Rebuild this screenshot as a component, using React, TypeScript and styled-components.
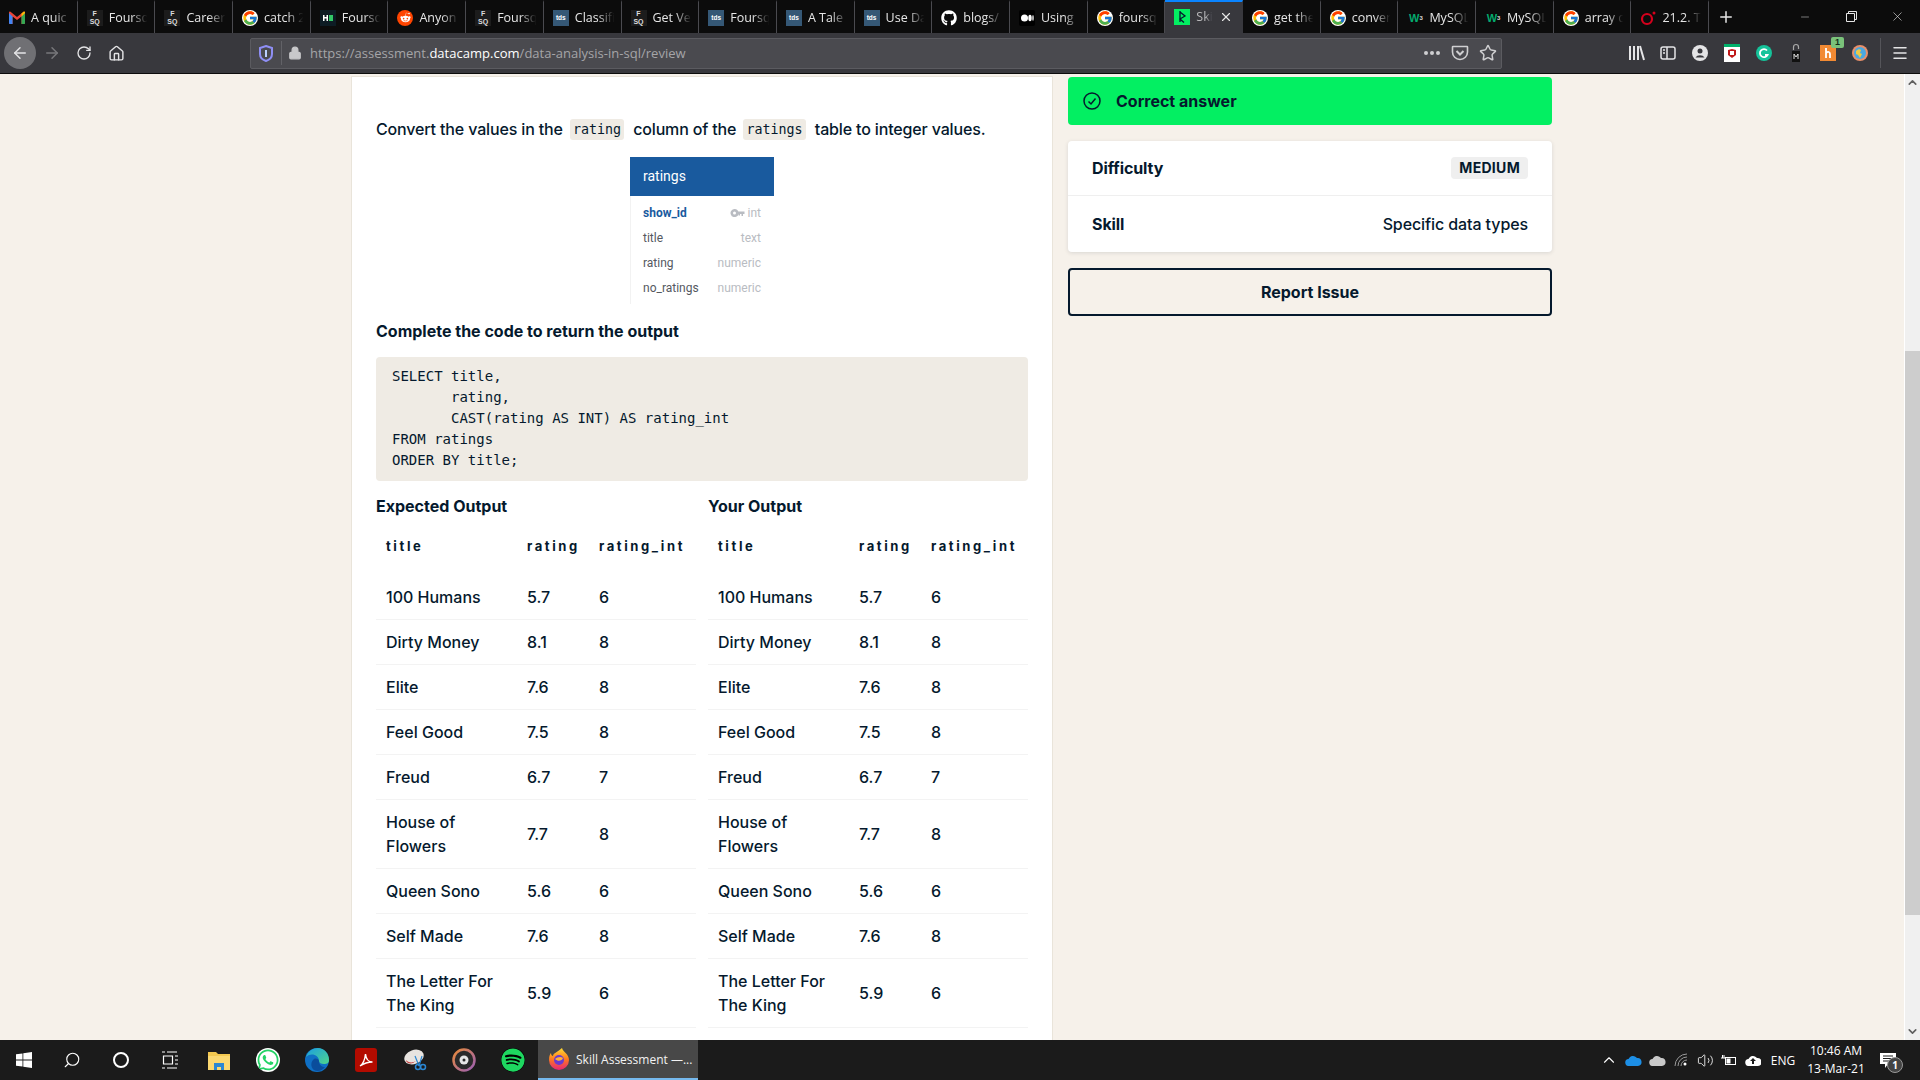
import React from "react";
import styled, { createGlobalStyle } from "styled-components";
import { ArrowLeft, ArrowRight, RotateCw, Home, Lock, Plus, Minus, X, Star, Menu, ChevronUp, ChevronDown, Search, Volume2 } from "lucide-react";
import { FcGoogle } from "react-icons/fc";
import { FaGithub, FaRedditAlien, FaWhatsapp, FaSpotify } from "react-icons/fa";

const GlobalStyle = createGlobalStyle`
  html, body { margin: 0; padding: 0; width: 1920px; height: 1080px; overflow: hidden; background: #f6f1ea; }
  * { box-sizing: border-box; }
`;

const Screen = styled.div`
  width: 1920px;
  height: 1080px;
  display: flex;
  flex-direction: column;
  font-family: Inter, "Liberation Sans", sans-serif;
  color: #05192d;
`;

/* browser chrome */
const TabStrip = styled.div`
  height: 33px;
  background: #0c0c0c;
  display: flex;
  font-family: "Open Sans", sans-serif;
`;

const TabItem = styled.div<{ $active?: boolean }>`
  width: 77.7px;
  height: 33px;
  display: flex;
  align-items: center;
  padding-left: 9px;
  padding-right: ${(p) => (p.$active ? "9px" : "5px")};
  gap: 6px;
  flex-shrink: 0;
  color: ${(p) => (p.$active ? "#b9b9bb" : "#e6e6e6")};
  background: ${(p) => (p.$active ? "#38383d" : "transparent")};
  border-right: 1px solid ${(p) => (p.$active ? "transparent" : "#4a4a4f")};
  border-top: 2px solid ${(p) => (p.$active ? "#0a84ff" : "transparent")};
  padding-bottom: ${(p) => (p.$active ? "2px" : "0")};
  font-size: 12.5px;
`;

const TabTitle = styled.span`
  flex: 1;
  min-width: 0;
  overflow: hidden;
  white-space: nowrap;
  -webkit-mask-image: linear-gradient(90deg, #000 55%, transparent 96%);
  mask-image: linear-gradient(90deg, #000 55%, transparent 96%);
`;

const Favicon = styled.span`
  width: 16px;
  height: 16px;
  flex-shrink: 0;
  display: flex;
  align-items: center;
  justify-content: center;
`;

const FsqIcon = styled(Favicon)`
  flex-direction: column;
  font: 700 7px/8px "Liberation Sans", sans-serif;
  color: #ddd;
  background: #1c1c1c;
`;

const TdsIcon = styled(Favicon)`
  background: #355876;
  color: #fff;
  font: 700 6.5px "Liberation Sans", sans-serif;
`;

const W3Icon = styled(Favicon)`
  color: #04aa6d;
  font: 700 11px "Liberation Sans", sans-serif;
  letter-spacing: -1px;
  sup { font-size: 6px; color: #ddd; margin-left: 1px; line-height: 0; }
`;

const NewTab = styled.div`
  width: 34px;
  display: flex;
  align-items: center;
  justify-content: center;
  color: #e6e6e6;
`;

const WindowControls = styled.div`
  margin-left: auto;
  display: flex;
  color: #e6e6e6;
`;

const WindowButton = styled.div`
  width: 46px;
  height: 33px;
  display: flex;
  align-items: center;
  justify-content: center;
`;

const Toolbar = styled.div`
  height: 41px;
  background: #38383d;
  border-bottom: 1px solid #0c0c0c;
  display: flex;
  align-items: center;
  padding-left: 4px;
  color: #e4e4e6;
`;

const NavButton = styled.div<{ $round?: boolean; $dim?: boolean }>`
  width: 32px;
  height: 32px;
  border-radius: 50%;
  display: flex;
  align-items: center;
  justify-content: center;
  background: ${(p) => (p.$round ? "#707074" : "transparent")};
  color: ${(p) => (p.$dim ? "#77777b" : "inherit")};
`;

const UrlBar = styled.div`
  width: 1252px;
  height: 31px;
  margin-left: 118px;
  background: #4a4a4f;
  border: 1px solid #5b5b60;
  border-radius: 2px;
  display: flex;
  align-items: center;
  padding-left: 7px;
  font: 400 13px "Open Sans", sans-serif;
  color: #a5a5a8;
`;

const UrlDivider = styled.span`
  width: 1px;
  height: 24px;
  background: #626267;
  margin: 0 6px 0 7px;
`;

const UrlText = styled.span`
  margin-left: 8px;
  flex: 1;
  letter-spacing: 0.02px;
  b { font-weight: 400; color: #fff; }
`;

const UrlActions = styled.div`
  display: flex;
  align-items: center;
  gap: 10px;
  padding-right: 4px;
  color: #cfcfd1;
`;

const ToolIcons = styled.div`
  margin-left: 124px;
  display: flex;
  align-items: center;
  gap: 12px;
`;

const ToolIcon = styled.span`
  width: 20px;
  height: 20px;
  display: flex;
  align-items: center;
  justify-content: center;
  position: relative;
`;

const ExtBadge = styled.span`
  position: absolute;
  top: -6px;
  right: -6px;
  width: 13px;
  height: 11px;
  border-radius: 2px;
  background: #7ac27a;
  color: #12301a;
  font: 700 9px/11px "Liberation Sans", sans-serif;
  text-align: center;
`;

const ToolDivider = styled.span`
  width: 1px;
  height: 30px;
  background: #55555a;
  margin-left: -2px;
  margin-right: -3px;
`;

/* page */
const Viewport = styled.div`
  flex: 1;
  min-height: 0;
  display: flex;
  background: #f6f1ea;
`;

const PageBody = styled.main`
  flex: 1;
  display: flex;
  align-items: flex-start;
  gap: 15px;
  padding-left: 351px;
  padding-top: 2px;
  overflow: hidden;
`;

const QuestionCard = styled.section`
  width: 702px;
  height: 1000px;
  flex-shrink: 0;
  background: #fff;
  border: 1px solid #e9e4da;
  padding: 40px 24px 0 24px;
`;

const Instruction = styled.p`
  margin: 0;
  font-size: 16px;
  font-weight: 500;
  line-height: 24px;
  letter-spacing: -0.15px;
  white-space: nowrap;
`;

const InlineCode = styled.code`
  display: inline-block;
  height: 21px;
  margin: 2px 5px 0 3px;
  padding: 0 3px;
  background: #efebe4;
  border-radius: 3px;
  font: 400 13.33px/21px "DejaVu Sans Mono", monospace;
  letter-spacing: 0;
  vertical-align: top;
`;

const SchemaTable = styled.div`
  width: 144px;
  margin: 16px auto 0;
  border-left: 1px solid #f2f2f2;
  height: 147px;
  font-family: Roboto, sans-serif;
`;

const SchemaHeader = styled.div`
  height: 39px;
  margin-left: -1px;
  padding-left: 13px;
  background: #195a9e;
  color: #fff;
  font-size: 14px;
  line-height: 39px;
`;

const SchemaRows = styled.div`
  padding-top: 4px;
`;

const SchemaRow = styled.div<{ $key?: boolean }>`
  height: 25px;
  padding: 0 13px 0 12px;
  display: flex;
  align-items: center;
  justify-content: space-between;
  font-size: 12px;
  font-weight: ${(p) => (p.$key ? 700 : 400)};
  color: ${(p) => (p.$key ? "#195a9e" : "#55595f")};
`;

const SchemaType = styled.span`
  color: #b9bcc2;
  font-weight: 400;
  display: flex;
  align-items: center;
  gap: 3px;
`;

const SectionHeading = styled.h3`
  margin: 15px 0 0;
  font-size: 16px;
  font-weight: 700;
  line-height: 24px;
`;

const CodeBlock = styled.pre`
  margin: 14px 0 13px;
  height: 124px;
  padding: 9px 16px 10px;
  background: #efebe4;
  border-radius: 4px;
  font: 400 14px/21px "DejaVu Sans Mono", monospace;
`;

const Outputs = styled.div`
  display: grid;
  grid-template-columns: 320px 320px;
  gap: 12px;
`;

const OutputTitle = styled.h3`
  margin: 0 0 13px;
  font-size: 16px;
  font-weight: 700;
  line-height: 24px;
`;

const DataTable = styled.table`
  width: 320px;
  border-collapse: collapse;
  table-layout: fixed;
  th {
    height: 44px;
    padding: 6px 0 0 10px;
    vertical-align: top;
    text-align: left;
    font: 700 13px/18px Inter, sans-serif;
    letter-spacing: 2.6px;
    white-space: nowrap;
  }
  td {
    padding: 10px 10px;
    font-size: 16px;
    font-weight: 500;
    line-height: 24px;
    border-bottom: 1px solid #f3f3f3;
  }
`;

const SideColumn = styled.aside`
  width: 484px;
  padding-top: 1px;
  display: flex;
  flex-direction: column;
`;

const CorrectBanner = styled.div`
  height: 48px;
  background: #03ef62;
  border-radius: 4px;
  display: flex;
  align-items: center;
  gap: 15px;
  padding-left: 15px;
  font-size: 16px;
  font-weight: 700;
`;

const InfoCard = styled.div`
  margin-top: 16px;
  height: 111px;
  background: #fff;
  border-radius: 4px;
  box-shadow: 0 1px 4px rgba(5, 25, 45, 0.12);
`;

const InfoRow = styled.div<{ $tall?: boolean }>`
  height: ${(p) => (p.$tall ? "56px" : "55px")};
  padding: 0 24px;
  display: flex;
  align-items: center;
  justify-content: space-between;
  font-size: 16px;
  font-weight: 500;
  letter-spacing: -0.1px;
  border-bottom: ${(p) => (p.$tall ? "0" : "1px solid #efefef")};
  strong { font-weight: 700; }
`;

const LevelBadge = styled.span`
  height: 22px;
  padding: 0 8px;
  border-radius: 4px;
  background: #efefef;
  font-size: 14px;
  font-weight: 700;
  letter-spacing: 0.3px;
  line-height: 22px;
`;

const ReportButton = styled.button`
  margin-top: 16px;
  height: 48px;
  background: transparent;
  border: 2px solid #05192d;
  border-radius: 4px;
  font: 700 16px Inter, sans-serif;
  color: #05192d;
`;

const ScrollBar = styled.div`
  width: 16px;
  flex-shrink: 0;
  background: #f0f0f0;
  display: flex;
  flex-direction: column;
  align-items: center;
  color: #606060;
  border-left: 1px solid #fff;
`;

const ScrollArrow = styled.div`
  height: 17px;
  display: flex;
  align-items: center;
  justify-content: center;
`;

const ScrollThumb = styled.div`
  width: 15px;
  height: 564px;
  margin-top: 260px;
  margin-bottom: auto;
  background: #cdcdcd;
`;

/* windows taskbar */
const Taskbar = styled.footer`
  height: 40px;
  background: #1b1b1b;
  display: flex;
  align-items: center;
  color: #fff;
  font-family: "Open Sans", sans-serif;
`;

const TaskIcon = styled.div<{ $start?: boolean }>`
  width: ${(p) => (p.$start ? "47px" : "49px")};
  height: 40px;
  flex-shrink: 0;
  display: flex;
  align-items: center;
  justify-content: center;
`;

const ActiveApp = styled.div`
  width: 160px;
  height: 40px;
  display: flex;
  align-items: center;
  gap: 6px;
  padding-left: 10px;
  background: #484848;
  border-bottom: 2px solid #76b9ed;
  font-size: 12px;
  color: #f2f2f2;
  margin-left: 1px;
`;

const Tray = styled.div`
  margin-left: auto;
  display: flex;
  align-items: center;
  height: 40px;
  padding-right: 16px;
  font-size: 12px;
`;

const TrayIcon = styled.span`
  width: 24px;
  display: flex;
  align-items: center;
  justify-content: center;
`;

const TrayText = styled.span`
  width: 34px;
  text-align: center;
  margin-left: 1px;
`;

const Clock = styled.div`
  width: 72px;
  text-align: center;
  line-height: 18px;
`;

const NotifyButton = styled.div`
  width: 32px;
  height: 40px;
  display: flex;
  align-items: center;
  justify-content: center;
  position: relative;
`;

const NotifyCount = styled.span`
  position: absolute;
  top: 17px;
  right: 1px;
  width: 16px;
  height: 16px;
  border-radius: 50%;
  border: 1px solid #999;
  background: #444;
  font: 700 10px/14px "Open Sans", sans-serif;
  text-align: center;
`;

/* favicons */
const GmailIcon = () => (
  <svg width="16" height="13" viewBox="0 0 16 13">
    <path d="M0 2v10a1 1 0 0 0 1 1h2.500V5.500L8 9V6L1.500.8A1 1 0 0 0 0 2z" fill="#e94335" />
    <path d="M16 2v10a1 1 0 0 1-1 1h-2.500V5.500L8 9V6l6.500-5.200A1 1 0 0 1 16 2z" fill="#e94335" />
    <path d="M0 2l3.500 3.500V13H1a1 1 0 0 1-1-1z" fill="#4285f4" />
    <path d="M16 2l-3.500 3.500V13H15a1 1 0 0 0 1-1z" fill="#34a853" />
    <path d="M16 2a1 1 0 0 0-1.500-1.200L12.500 2.400v3.100z" fill="#fbbc05" />
  </svg>
);

const Fsq = () => (
  <FsqIcon>
    <span>F</span>
    <span>SQ</span>
  </FsqIcon>
);

const Tds = () => <TdsIcon>tds</TdsIcon>;

const Google = () => (
  <Favicon>
    <FcGoogle size={16} style={{ background: "#fff", borderRadius: 8 }} />
  </Favicon>
);

const HnIcon = () => (
  <Favicon>
    <svg width="16" height="16" viewBox="0 0 16 16">
      <rect width="16" height="16" fill="#0d1c24" />
      <path d="M3 5h1.500v2h2V5H8v6H6.500V8.500h-2V11H3z" fill="#fff" />
      <rect x="9" y="5" width="4" height="6" fill="#32c766" />
    </svg>
  </Favicon>
);

const RedditIcon = () => (
  <Favicon style={{ background: "#ff4500", borderRadius: 8 }}>
    <FaRedditAlien size={11} color="#fff" />
  </Favicon>
);

const MediumIcon = () => (
  <Favicon>
    <svg width="16" height="16" viewBox="0 0 16 16">
      <rect width="16" height="16" rx="2" fill="#000" />
      <circle cx="5.500" cy="8" r="3.500" fill="#fff" />
      <ellipse cx="11" cy="8" rx="1.700" ry="3.200" fill="#fff" />
      <ellipse cx="14" cy="8" rx="0.700" ry="2.900" fill="#fff" />
    </svg>
  </Favicon>
);

const DatacampIcon = () => (
  <Favicon>
    <svg width="16" height="16" viewBox="0 0 16 16">
      <rect width="16" height="16" fill="#03ef62" />
      <path d="M6 2v11M6 3l5 4-5 3 4 3.500" fill="none" stroke="#05192d" strokeWidth="1.300" />
    </svg>
  </Favicon>
);

const OperaIcon = () => (
  <Favicon>
    <svg width="16" height="16" viewBox="0 0 16 16">
      <circle cx="7" cy="9" r="5" fill="none" stroke="#d5001c" strokeWidth="2.200" />
      <circle cx="14" cy="3" r="1.500" fill="#d5001c" />
    </svg>
  </Favicon>
);

const W3 = () => (
  <W3Icon>
    W<sup>3</sup>
  </W3Icon>
);

type TabData = { title: string; icon: React.ReactNode; active?: boolean };

const tabs: TabData[] = [
  { title: "A quic", icon: <Favicon><GmailIcon /></Favicon> },
  { title: "Foursq", icon: <Fsq /> },
  { title: "Career", icon: <Fsq /> },
  { title: "catch 2", icon: <Google /> },
  { title: "Foursq", icon: <HnIcon /> },
  { title: "Anyon", icon: <RedditIcon /> },
  { title: "Foursq", icon: <Fsq /> },
  { title: "Classifi", icon: <Tds /> },
  { title: "Get Ve", icon: <Fsq /> },
  { title: "Foursq", icon: <Tds /> },
  { title: "A Tale", icon: <Tds /> },
  { title: "Use Da", icon: <Tds /> },
  { title: "blogs/", icon: <Favicon><FaGithub size={16} color="#fff" /></Favicon> },
  { title: "Using", icon: <MediumIcon /> },
  { title: "foursq", icon: <Google /> },
  { title: "Ski", icon: <DatacampIcon />, active: true },
  { title: "get the", icon: <Google /> },
  { title: "conver", icon: <Google /> },
  { title: "MySQL", icon: <W3 /> },
  { title: "MySQL", icon: <W3 /> },
  { title: "array d", icon: <Google /> },
  { title: "21.2. T", icon: <OperaIcon /> },
];

const columns = ["title", "rating", "rating_int"];

const outputRows: [string, string, string][] = [
  ["100 Humans", "5.7", "6"],
  ["Dirty Money", "8.1", "8"],
  ["Elite", "7.6", "8"],
  ["Feel Good", "7.5", "8"],
  ["Freud", "6.7", "7"],
  ["House of Flowers", "7.7", "8"],
  ["Queen Sono", "5.6", "6"],
  ["Self Made", "7.6", "8"],
  ["The Letter For The King", "5.9", "6"],
];

const schema = [
  { name: "title", type: "text" },
  { name: "rating", type: "numeric" },
  { name: "no_ratings", type: "numeric" },
];

const code = `SELECT title,
       rating,
       CAST(rating AS INT) AS rating_int
FROM ratings
ORDER BY title;`;

const OutputTable: React.FC<{ title: string }> = ({ title }) => (
  <div>
    <OutputTitle>{title}</OutputTitle>
    <DataTable>
      <colgroup>
        <col style={{ width: 141 }} />
        <col style={{ width: 72 }} />
        <col />
      </colgroup>
      <thead>
        <tr>
          {columns.map((c) => (
            <th key={c}>{c}</th>
          ))}
        </tr>
      </thead>
      <tbody>
        {outputRows.map((row) => (
          <tr key={row[0]}>
            {row.map((cell, i) => (
              <td key={i}>{cell}</td>
            ))}
          </tr>
        ))}
      </tbody>
    </DataTable>
  </div>
);

const App: React.FC = () => {
  return (
    <Screen>
      <GlobalStyle />
      <TabStrip>
        {tabs.map((t, i) => (
          <TabItem key={i} $active={t.active}>
            {t.icon}
            <TabTitle>{t.title}</TabTitle>
            {t.active && <X size={14} color="#e6e6e6" style={{ flexShrink: 0 }} />}
          </TabItem>
        ))}
        <NewTab>
          <Plus size={18} />
        </NewTab>
        <WindowControls>
          <WindowButton><Minus size={12} strokeWidth={1} /></WindowButton>
          <WindowButton>
            <svg width="11" height="11" viewBox="0 0 11 11" fill="none" stroke="currentColor">
              <path d="M.5 2.500h8v8h-8zM2.500 2.500v-2h8v8h-2" />
            </svg>
          </WindowButton>
          <WindowButton><X size={15} strokeWidth={1} /></WindowButton>
        </WindowControls>
      </TabStrip>

      <Toolbar>
        <NavButton $round><ArrowLeft size={18} /></NavButton>
        <NavButton $dim><ArrowRight size={18} /></NavButton>
        <NavButton><RotateCw size={16} /></NavButton>
        <NavButton><Home size={17} /></NavButton>
        <UrlBar>
          <svg width="16" height="17" viewBox="0 0 16 17">
            <path d="M8 1l6 2v6c0 3.500-3 6-6 7-3-1-6-3.500-6-7V3z" fill="none" stroke="#8f8ff5" strokeWidth="2" />
            <path d="M8 5v7" stroke="#bcd0ff" strokeWidth="2" />
          </svg>
          <UrlDivider />
          <Lock size={14} fill="#c8c8ca" color="#c8c8ca" />
          <UrlText>
            https://assessment.<b>datacamp.com</b>/data-analysis-in-sql/review
          </UrlText>
          <UrlActions>
            <svg width="18" height="6" viewBox="0 0 18 6" fill="currentColor">
              <circle cx="3" cy="3" r="2" />
              <circle cx="9" cy="3" r="2" />
              <circle cx="15" cy="3" r="2" />
            </svg>
            <svg width="18" height="18" viewBox="0 0 18 18" fill="none" stroke="currentColor" strokeWidth="1.600">
              <path d="M2 2.500h14a.5.5 0 0 1 .5.5v5a7.500 7.500 0 0 1-15 0V3a.5.5 0 0 1 .5-.5z" />
              <path d="M5.500 7L9 10.500 12.500 7" strokeWidth="2" />
            </svg>
            <Star size={18} />
          </UrlActions>
        </UrlBar>
        <ToolIcons>
          <ToolIcon>
            <svg width="17" height="16" viewBox="0 0 17 16" fill="none" stroke="currentColor" strokeWidth="2">
              <path d="M2 1v14M6 1v14M10 1v14M12 1l4 14" />
            </svg>
          </ToolIcon>
          <ToolIcon>
            <svg width="16" height="16" viewBox="0 0 16 16" fill="none" stroke="currentColor" strokeWidth="1.500">
              <rect x="1" y="2" width="14" height="12" rx="2" />
              <path d="M7 2v12M3 5h2M3 8h2" />
            </svg>
          </ToolIcon>
          <ToolIcon>
            <svg width="16" height="16" viewBox="0 0 16 16">
              <circle cx="8" cy="8" r="8" fill="currentColor" />
              <circle cx="8" cy="6" r="2.500" fill="#38383d" />
              <path d="M3.500 12.500a5 4 0 0 1 9 0z" fill="#38383d" />
            </svg>
          </ToolIcon>
          <ToolIcon>
            <svg width="16" height="18" viewBox="0 0 16 18">
              <rect y="0" width="16" height="18" fill="#fff" />
              <rect y="0" width="16" height="3" fill="#00b16a" />
              <path d="M4 6l4-1 4 1v5l-4 3-4-3z" fill="#c01818" />
              <path d="M6 7h4v4H6z" fill="#fff" />
            </svg>
          </ToolIcon>
          <ToolIcon>
            <svg width="16" height="16" viewBox="0 0 16 16">
              <circle cx="8" cy="8" r="8" fill="#15c39a" />
              <path d="M11 5.500A4 4 0 1 0 11.500 10H9" fill="none" stroke="#fff" strokeWidth="1.800" />
            </svg>
          </ToolIcon>
          <ToolIcon>
            <svg width="10" height="20" viewBox="0 0 10 20">
              <path d="M2.500 7V4a2.500 2.500 0 0 1 5 0v2" fill="none" stroke="#aaa" strokeWidth="1.200" />
              <rect x="1" y="8" width="8" height="11" fill="#111" />
              <path d="M3 16v-5l2 3 2-3v5" fill="none" stroke="#ddd" strokeWidth="1" />
            </svg>
          </ToolIcon>
          <ToolIcon>
            <svg width="16" height="16" viewBox="0 0 16 16">
              <rect width="16" height="16" fill="#f28a33" />
              <path d="M6 3v10M6 8c2-2 4-1 4 1v4" fill="none" stroke="#fff" strokeWidth="1.800" />
            </svg>
            <ExtBadge>1</ExtBadge>
          </ToolIcon>
          <ToolIcon>
            <svg width="16" height="16" viewBox="0 0 16 16">
              <circle cx="8" cy="8" r="8" fill="#e88f6a" />
              <circle cx="8" cy="8" r="6" fill="#4aa8e0" />
              <path d="M4 6c2-2 4-2 5-1l-1 3 2 1-2 4-2-3-2-1z" fill="#e9c94a" />
            </svg>
          </ToolIcon>
          <ToolDivider />
          <ToolIcon><Menu size={18} /></ToolIcon>
        </ToolIcons>
      </Toolbar>

      <Viewport>
        <PageBody>
          <QuestionCard>
            <Instruction>
              Convert the values in the <InlineCode>rating</InlineCode> column of the{" "}
              <InlineCode>ratings</InlineCode> table to integer values.
            </Instruction>
            <SchemaTable>
              <SchemaHeader>ratings</SchemaHeader>
              <SchemaRows>
                <SchemaRow $key>
                  show_id
                  <SchemaType>
                    <svg width="15" height="8" viewBox="0 0 14 8" fill="#b9bcc2">
                      <path d="M4 0a4 4 0 1 1-3.800 5.200A4 4 0 0 1 4 0zm0 2.500a1.500 1.500 0 1 0 0 3 1.500 1.500 0 0 0 0-3zM7 2.500h7V5h-1.500v2H11V5H9.500v1.500H8V5H7z" />
                    </svg>
                    int
                  </SchemaType>
                </SchemaRow>
                {schema.map((s) => (
                  <SchemaRow key={s.name}>
                    {s.name}
                    <SchemaType>{s.type}</SchemaType>
                  </SchemaRow>
                ))}
              </SchemaRows>
            </SchemaTable>
            <SectionHeading>Complete the code to return the output</SectionHeading>
            <CodeBlock>{code}</CodeBlock>
            <Outputs>
              <OutputTable title="Expected Output" />
              <OutputTable title="Your Output" />
            </Outputs>
          </QuestionCard>

          <SideColumn>
            <CorrectBanner>
              <svg width="18" height="18" viewBox="0 0 18 18" fill="none" stroke="#05192d" strokeWidth="1.500">
                <circle cx="9" cy="9" r="8" />
                <path d="M5.500 9.500L8 12l4.500-5.500" />
              </svg>
              Correct answer
            </CorrectBanner>
            <InfoCard>
              <InfoRow>
                <strong>Difficulty</strong>
                <LevelBadge>MEDIUM</LevelBadge>
              </InfoRow>
              <InfoRow $tall>
                <strong>Skill</strong>
                Specific data types
              </InfoRow>
            </InfoCard>
            <ReportButton>Report Issue</ReportButton>
          </SideColumn>
        </PageBody>
        <ScrollBar>
          <ScrollArrow><ChevronUp size={13} strokeWidth={3} /></ScrollArrow>
          <ScrollThumb />
          <ScrollArrow><ChevronDown size={13} strokeWidth={3} /></ScrollArrow>
        </ScrollBar>
      </Viewport>

      <Taskbar>
        <TaskIcon $start>
          <svg width="16" height="16" viewBox="0 0 16 16" fill="#fff">
            <path d="M0 2.300l6.500-.9v6.200H0zM7.300 1.300L16 0v7.600H7.300zM0 8.400h6.500v6.200L0 13.700zM7.300 8.400H16V16l-8.700-1.300z" />
          </svg>
        </TaskIcon>
        <TaskIcon><Search size={18} style={{ transform: "scaleX(-1)" }} strokeWidth={1.500} /></TaskIcon>
        <TaskIcon>
          <svg width="16" height="16" viewBox="0 0 16 16" fill="none" stroke="#fff" strokeWidth="2">
            <circle cx="8" cy="8" r="7" />
          </svg>
        </TaskIcon>
        <TaskIcon>
          <svg width="18" height="18" viewBox="0 0 18 18" fill="none" stroke="#fff" strokeWidth="1.200">
            <path d="M1 1h3M6 1h10M1 17h3M6 17h10M2.500 5h9v8h-9zM14 5h3M14 13h3M14 9h3" />
          </svg>
        </TaskIcon>
        <TaskIcon>
          <svg width="22" height="20" viewBox="0 0 22 20">
            <path d="M0 2h8l2 2h12v16H0z" fill="#f3c850" />
            <rect x="0" y="6" width="22" height="14" fill="#fbd871" />
            <path d="M6 13h10v7h-3v-3H9v3H6z" fill="#2b87d3" />
          </svg>
        </TaskIcon>
        <TaskIcon>
          <FaWhatsapp size={24} color="#25d366" style={{ background: "#fff", borderRadius: 12 }} />
        </TaskIcon>
        <TaskIcon>
          <svg width="24" height="24" viewBox="0 0 24 24">
            <defs>
              <linearGradient id="edgeA" x1="0" y1="0" x2="1" y2="1">
                <stop offset="0" stopColor="#1b9de2" />
                <stop offset="1" stopColor="#4fd68a" />
              </linearGradient>
            </defs>
            <circle cx="12" cy="12" r="12" fill="#0f6fc4" />
            <path d="M1 9C3 3 8 0 13 0c6 0 11 5 11 12 0 3-2 4-5 4-3 0-5-1-5-3 0-6-8-9-13-4z" fill="url(#edgeA)" />
            <path d="M14 13c0 4 3 6 6 6-3 4-8 5-11 3C5 19 6 13 9 11c2-1 5 0 5 2z" fill="#0a4d9c" />
          </svg>
        </TaskIcon>
        <TaskIcon>
          <svg width="22" height="24" viewBox="0 0 22 24">
            <rect width="22" height="24" rx="3" fill="#b30b00" />
            <path d="M5 18c3-2 5-7 5.500-12 .5 5 3 8 7 8-4 0-8 1-12.500 4z" fill="none" stroke="#fff" strokeWidth="1.400" />
          </svg>
        </TaskIcon>
        <TaskIcon>
          <svg width="24" height="24" viewBox="0 0 24 24">
            <ellipse cx="11" cy="9" rx="10" ry="7" fill="#e8e4e0" transform="rotate(-20 11 9)" />
            <path d="M3 12c2 3 7 3 10 1l-3 2c-3 1-7 0-7-3z" fill="#c23b3b" />
            <circle cx="15" cy="19" r="2.500" fill="none" stroke="#2b87d3" strokeWidth="1.500" />
            <circle cx="20" cy="19" r="2.500" fill="none" stroke="#2b87d3" strokeWidth="1.500" />
            <path d="M12 8l4 10M19 8l-3 10" stroke="#2b87d3" strokeWidth="1.200" />
          </svg>
        </TaskIcon>
        <TaskIcon>
          <svg width="24" height="24" viewBox="0 0 24 24">
            <defs>
              <linearGradient id="ringA" x1="0" y1="0" x2="1" y2="1">
                <stop offset="0" stopColor="#e98a3a" />
                <stop offset="1" stopColor="#9a5fb5" />
              </linearGradient>
            </defs>
            <circle cx="12" cy="12" r="10.500" fill="#2a2a2a" stroke="url(#ringA)" strokeWidth="2.500" />
            <circle cx="12" cy="12" r="4.500" fill="#e6e6e6" />
            <circle cx="12" cy="12" r="1.500" fill="#2a2a2a" />
          </svg>
        </TaskIcon>
        <TaskIcon>
          <FaSpotify size={24} color="#1ed760" style={{ background: "#000", borderRadius: 12 }} />
        </TaskIcon>
        <ActiveApp>
          <svg width="22" height="22" viewBox="0 0 22 22">
            <defs>
              <linearGradient id="foxA" x1="0.500" y1="0" x2="0.500" y2="1">
                <stop offset="0" stopColor="#ffdd33" />
                <stop offset=".5" stopColor="#ff7a1f" />
                <stop offset="1" stopColor="#e5247a" />
              </linearGradient>
            </defs>
            <path d="M14 0c1 4 7 6 7 12a10 10 0 0 1-20 0c0-4 1-6 2-7 0 2 1 3 2 3 0-3 5-4 9-8z" fill="url(#foxA)" />
            <circle cx="11" cy="12" r="5" fill="#6a3ad0" />
            <path d="M7 11c2-2 6-3 8-1-1 3-5 4-8 1z" fill="#ffb03a" />
          </svg>
          Skill Assessment —...
        </ActiveApp>
        <Tray>
          <TrayIcon><ChevronUp size={18} strokeWidth={1.500} /></TrayIcon>
          <TrayIcon>
            <svg width="17" height="11" viewBox="0 0 17 11">
              <path d="M4 11a3.500 3.500 0 0 1-.5-7A5 5 0 0 1 12 3a4 4 0 0 1 1 8z" fill="#1d8fe6" />
            </svg>
          </TrayIcon>
          <TrayIcon>
            <svg width="17" height="11" viewBox="0 0 17 11">
              <path d="M4 11a3.500 3.500 0 0 1-.5-7A5 5 0 0 1 12 3a4 4 0 0 1 1 8z" fill="#c9c9c9" />
            </svg>
          </TrayIcon>
          <TrayIcon>
            <svg width="14" height="14" viewBox="0 0 14 14" fill="none" stroke="#9a9a9a" strokeWidth="1">
              <path d="M1 13A12 12 0 0 1 13 1M4 13a9 9 0 0 1 9-9M7 13a6 6 0 0 1 6-6" />
              <circle cx="11" cy="11" r="1.500" fill="#fff" stroke="none" />
            </svg>
          </TrayIcon>
          <TrayIcon><Volume2 size={17} strokeWidth={1.200} /></TrayIcon>
          <TrayIcon>
            <svg width="16" height="11" viewBox="0 0 16 11" fill="none" stroke="#fff">
              <rect x="4.500" y="2.500" width="10" height="7" />
              <rect x="5.500" y="3.500" width="4" height="5" fill="#fff" stroke="none" />
              <path d="M0 3h4M1.500 0v3M3 0v3" />
            </svg>
          </TrayIcon>
          <TrayIcon>
            <svg width="16" height="11" viewBox="0 0 16 11">
              <path d="M4 11a3.500 3.500 0 0 1-.5-7A5 5 0 0 1 12 3a4 4 0 0 1 1 8z" fill="#fff" />
              <path d="M8 3l3 3H9v3H7V6H5z" fill="#1b1b1b" />
            </svg>
          </TrayIcon>
          <TrayText>ENG</TrayText>
          <Clock>
            10:46 AM
            <br />
            13-Mar-21
          </Clock>
          <NotifyButton>
            <svg width="16" height="15" viewBox="0 0 16 15">
              <path d="M0 0h16v11H8l-3 4v-4H0z" fill="#fff" />
              <path d="M3 3h10M3 5.500h10M3 8h7" stroke="#1b1b1b" />
            </svg>
            <NotifyCount>1</NotifyCount>
          </NotifyButton>
        </Tray>
      </Taskbar>
    </Screen>
  );
};

export default App;
